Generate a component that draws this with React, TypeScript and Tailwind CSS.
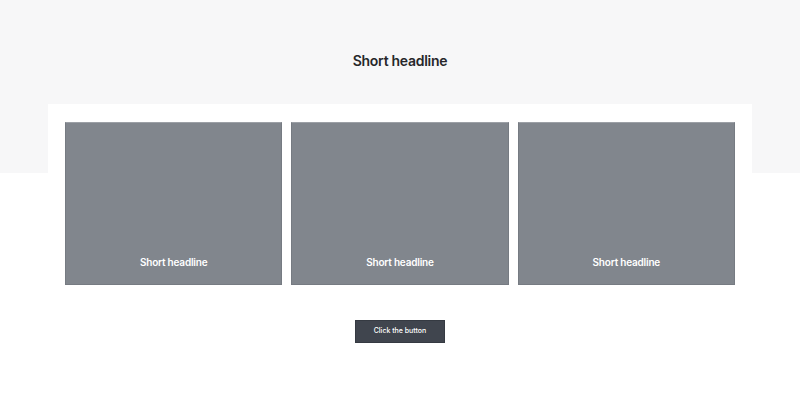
export default function App() {
  const cards = ['Short headline', 'Short headline', 'Short headline']

  return (
    <div className="min-h-[414px] bg-white font-['Inter',sans-serif]">
      {/* Grey band with title */}
      <div className="bg-[#f7f7f8] pt-[50px] pb-[101px]">
        <h1 className="text-center text-[14px] font-semibold leading-[22px] tracking-[-0.02em] text-[#27272a]">
          Short headline
        </h1>
      </div>

      {/* White panel with cards */}
      <div className="mx-[48px] -mt-[69px] bg-white px-[17px] pt-[18px]">
        <div className="grid grid-cols-3 gap-[9px]">
          {cards.map((title, i) => (
            <div
              key={i}
              className="flex h-[163px] items-end justify-center border border-[#767b82] border-t-[#9ca0a6] bg-[#81868d] pb-[14px]"
            >
              <span className="text-[10px] font-semibold leading-4 tracking-[-0.02em] text-white">{title}</span>
            </div>
          ))}
        </div>
      </div>

      <div className="mt-[35px] flex justify-center">
        <button className="h-[23px] w-[90px] border border-[#353a42] bg-[#40454e] text-[7px] font-medium text-white">
          Click the button
        </button>
      </div>
    </div>
  )
}
